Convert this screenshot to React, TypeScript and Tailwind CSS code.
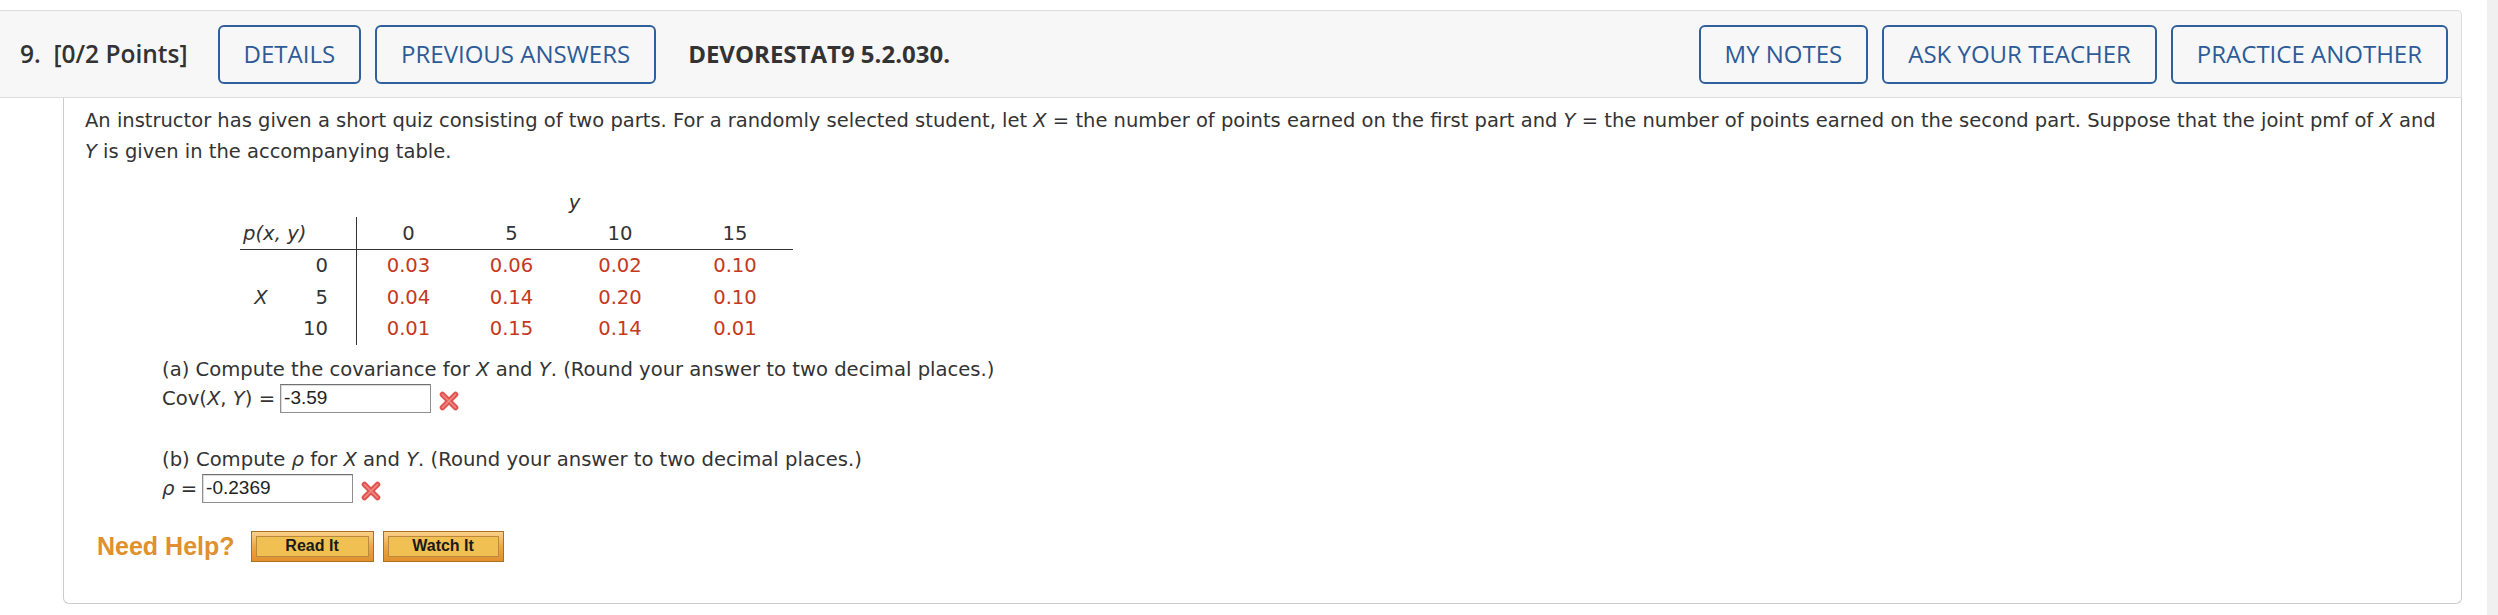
import type { ReactNode } from 'react'

const headerBtn =
  'flex h-[59px] items-center rounded-[6px] border-2 border-[#30609b] bg-[#f7f7f7] px-6 text-[24px] leading-none text-[#2d5b97]'

const cols = ['0', '5', '10', '15']
const rows = [
  { x: '0', label: '', vals: ['0.03', '0.06', '0.02', '0.10'] },
  { x: '5', label: 'X', vals: ['0.04', '0.14', '0.20', '0.10'] },
  { x: '10', label: '', vals: ['0.01', '0.15', '0.14', '0.01'] },
]
const colWidths = ['w-[104px]', 'w-[103px]', 'w-[114px]', 'w-[116px]']

function WrongMark() {
  return (
    <svg width="24" height="24" viewBox="0 0 22 22" className="ml-[6px] mt-[5px]">
      <path d="M5 5 L17 17 M17 5 L5 17" stroke="#e0534f" strokeWidth="5" strokeLinecap="round" />
      <path d="M5 5 L17 17 M17 5 L5 17" stroke="#ef8a86" strokeWidth="1.5" strokeLinecap="round" />
    </svg>
  )
}

function AnswerBox({ value, width }: { value: string; width: string }) {
  return (
    <div
      className={`${width} flex h-[29px] items-center border border-[#8f8f8f] border-t-[#707070] bg-white pl-[3px] font-['Liberation_Sans',Arial,sans-serif] text-[19px] text-[#222] shadow-[inset_1px_1px_1px_rgba(0,0,0,0.15)]`}
    >
      {value}
    </div>
  )
}

function HelpButton({ children, width }: { children: ReactNode; width: string }) {
  return (
    <div
      className={`${width} h-[31px] border border-[#a8701f] bg-gradient-to-b from-[#f9d18a] via-[#eda844] to-[#e1902c] p-[4px]`}
    >
      <div className="flex h-full items-center justify-center border border-[#b98a3c] bg-[#f0c052] font-['Liberation_Sans',Arial,sans-serif] text-[16px] font-bold leading-none text-[#1a1a1a]">
        {children}
      </div>
    </div>
  )
}

export default function App() {
  return (
    <div className="flex h-[615px] w-[2498px] bg-white font-['DejaVu_Sans',Verdana,sans-serif] text-[#333]">
      <div className="w-[2462px] pt-[10px]">
        <div className="flex h-[88px] items-center rounded-tr-[5px] border-y border-r border-[#dddddd] bg-[#f7f7f7] pl-[20px] pr-[13px] font-['Open_Sans',sans-serif]">
          <span className="text-[24.5px] font-semibold text-[#333]">
            9.&nbsp; [0/2 Points]
          </span>
          <div className="ml-[30px] flex gap-[14px]">
            <button className={headerBtn}>DETAILS</button>
            <button className={headerBtn}>PREVIOUS ANSWERS</button>
          </div>
          <span className="ml-[32px] text-[24px] font-bold text-[#333]">DEVORESTAT9 5.2.030.</span>
          <div className="ml-auto flex gap-[14px]">
            <button className={headerBtn}>MY NOTES</button>
            <button className={headerBtn}>ASK YOUR TEACHER</button>
            <button className={headerBtn}>PRACTICE ANOTHER</button>
          </div>
        </div>

        <div className="ml-[63px] h-[506px] rounded-b-[6px] border-x border-b border-[#cccccc] pl-[21px] pt-[7px]">
          <p className="text-[19.5px] leading-[31px]">
            <span className="whitespace-nowrap">
              An instructor has given a short quiz consisting of two parts. For a randomly selected student, let{' '}
              <i>X</i> = the number of points earned on the first part and <i>Y</i> = the number of points earned on
              the second part. Suppose that the joint pmf of <i>X</i> and
            </span>
            <br />
            <i>Y</i> is given in the accompanying table.
          </p>

          <div className="ml-[155px] mt-[22px] w-[553px] text-[19.6px]">
            <div className="flex h-[28px] items-center pl-[116px]">
              <span className="w-[437px] text-center italic">y</span>
            </div>
            <div className="flex h-[33px] border-b border-[#333]">
              <div className="flex w-[116px] items-center pl-[3px] pt-[2px] italic">p(x, y)</div>
              {cols.map((c, i) => (
                <div
                  key={c}
                  className={`${colWidths[i]} flex items-center justify-center pt-[2px] ${i === 0 ? 'border-l border-[#333]' : ''}`}
                >
                  {c}
                </div>
              ))}
            </div>
            {rows.map((r) => (
              <div key={r.x} className="flex h-[31.5px]">
                <div className="flex w-[116px] items-center">
                  <span className="w-[42px] text-center italic">{r.label}</span>
                  <span className="w-[46px] text-right">{r.x}</span>
                </div>
                {r.vals.map((v, i) => (
                  <div
                    key={i}
                    className={`${colWidths[i]} flex items-center justify-center text-[#c4391d] ${i === 0 ? 'border-l border-[#333]' : ''}`}
                  >
                    {v}
                  </div>
                ))}
              </div>
            ))}
          </div>

          <div className="ml-[77px] mt-[10px] text-[19.6px]">
            <p className="leading-[29px]">
              (a) Compute the covariance for <i>X</i> and <i>Y</i>. (Round your answer to two decimal places.)
            </p>
            <div className="flex h-[30px] items-start">
              <span className="mr-[5px] leading-[30px]">
                Cov(<i>X</i>, <i>Y</i>) =
              </span>
              <AnswerBox value="-3.59" width="w-[151px]" />
              <WrongMark />
            </div>

            <p className="mt-[31px] leading-[29px]">
              (b) Compute <i>ρ</i> for <i>X</i> and <i>Y</i>. (Round your answer to two decimal places.)
            </p>
            <div className="flex h-[30px] items-start">
              <span className="mr-[5px] leading-[30px]">
                <i>ρ</i> =
              </span>
              <AnswerBox value="-0.2369" width="w-[151px]" />
              <WrongMark />
            </div>
          </div>

          <div className="ml-[12px] mt-[27px] flex items-center">
            <span className="mr-[16px] font-['Liberation_Sans',Arial,sans-serif] text-[25px] font-bold leading-none text-[#e0902e]">
              Need Help?
            </span>
            <HelpButton width="w-[123px]">Read It</HelpButton>
            <div className="w-[9px]" />
            <HelpButton width="w-[121px]">Watch It</HelpButton>
          </div>
        </div>
      </div>
      <div className="w-[25px]" />
      <div className="h-full w-[11px] bg-[#f0f0f0]" />
    </div>
  )
}
